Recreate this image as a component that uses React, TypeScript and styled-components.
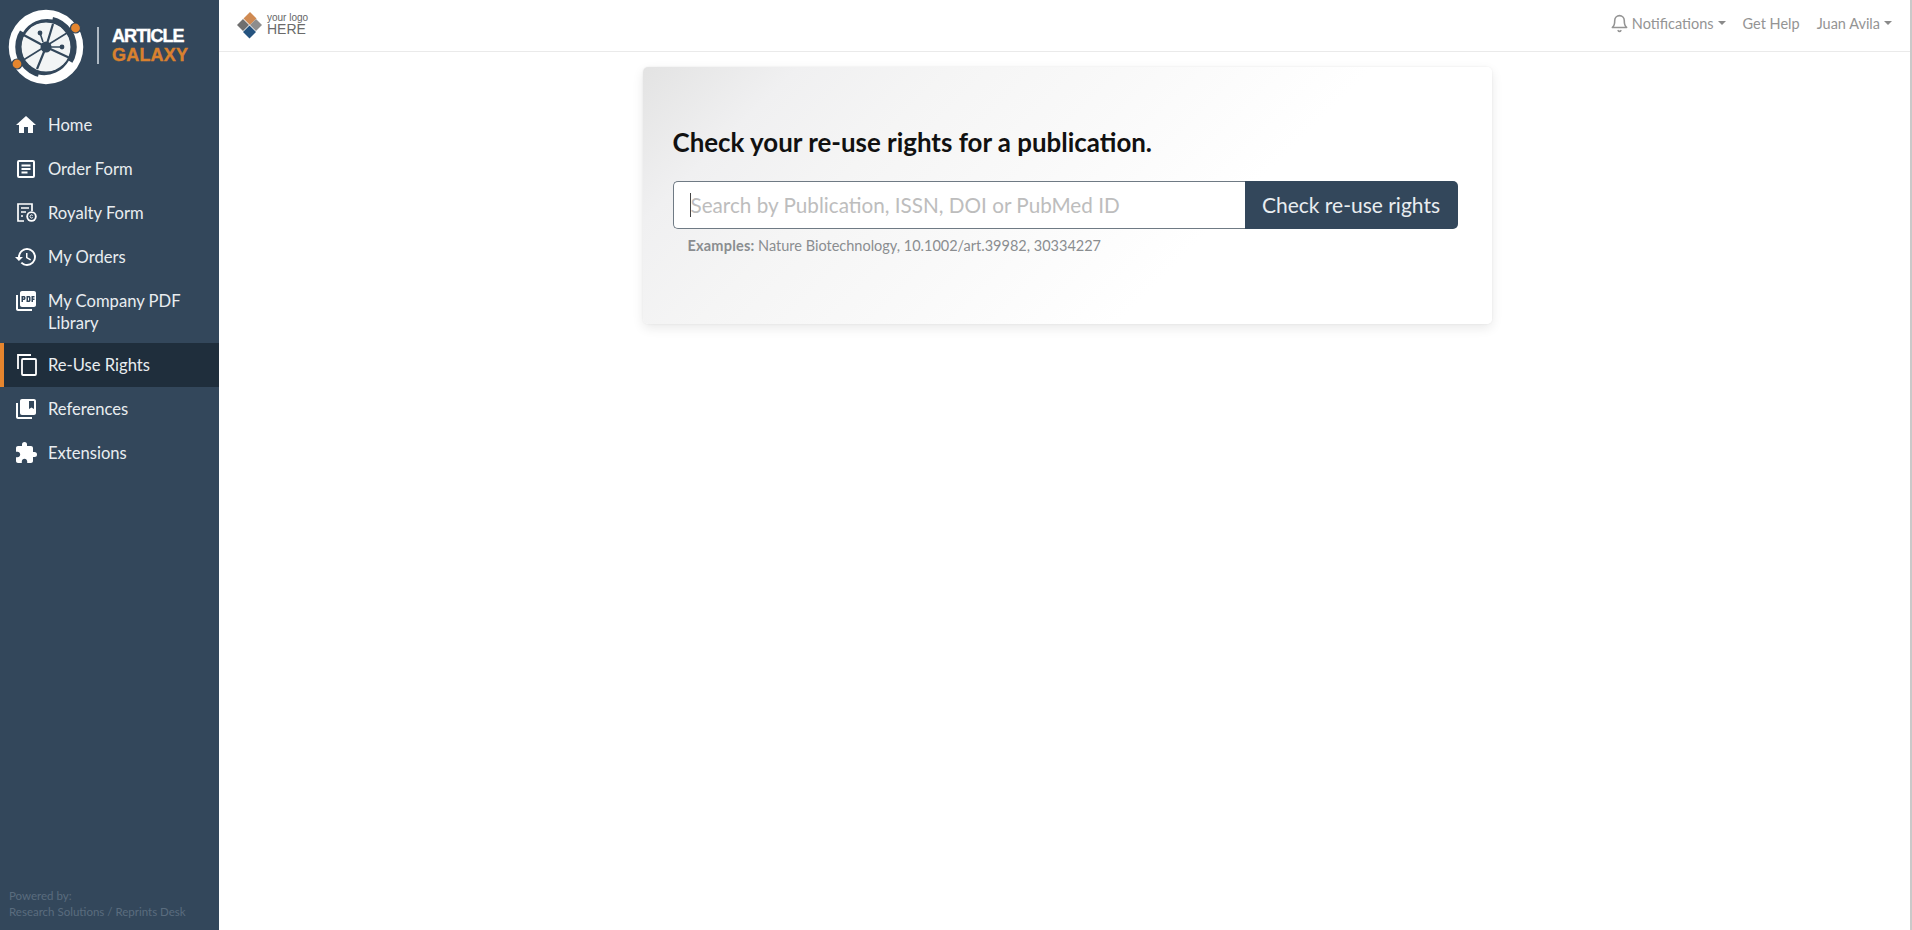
import React from 'react';
import styled, { createGlobalStyle } from 'styled-components';
import {
    MdCollectionsBookmark,
    MdExtension,
    MdHistory,
    MdHome,
    MdPictureAsPdf,
} from 'react-icons/md';
import { FiBell } from 'react-icons/fi';

const GlobalStyle = createGlobalStyle`
    html, body {
        margin: 0;
        height: 100%;
        background: #fff;
    }
    body {
        font-family: 'Lato', 'Noto Sans', sans-serif;
        overflow: hidden;
    }
`

const Page = styled.div`
    display: flex;
    height: 930px;
    width: 1912px;
    border-right: 2px solid #c9c9c9;
    box-sizing: border-box;
`

const Sidebar = styled.aside`
    width: 219px;
    flex: none;
    display: flex;
    flex-direction: column;
    background: #33475b;
`

const LogoRow = styled.div`
    height: 103px;
    display: flex;
    align-items: flex-start;
`

const LogoDivider = styled.div`
    width: 2px;
    height: 37px;
    background: #aeb9c3;
    margin: 27px 13px 0 5px;
`

const LogoWords = styled.div`
    margin-top: 27px;
    font-family: 'Liberation Sans', sans-serif;
    font-weight: 700;
    font-size: 18px;
    line-height: 18.5px;
`

const LogoWord = styled.div<{ $orange?: boolean }>`
    color: ${props => props.$orange ? '#d9812f' : '#fff'};
    letter-spacing: ${props => props.$orange ? '0.2px' : '-0.9px'};
    -webkit-text-stroke: 0.4px ${props => props.$orange ? '#d9812f' : '#fff'};
`

const Nav = styled.nav`
    display: flex;
    flex-direction: column;
    flex: 1;
`

const NavItem = styled.a<{ $active?: boolean; $wrapped?: boolean }>`
    display: flex;
    align-items: flex-start;
    padding: 11px 12px ${props => props.$wrapped ? '9px' : '11px'} ${props => props.$active ? '10px' : '14px'};
    color: #e9edf0;
    font-size: 16.6px;
    line-height: 22px;
    background: ${props => props.$active ? '#1f2e3c' : 'transparent'};
    border-left: ${props => props.$active ? '4px solid #e5852e' : '0 solid transparent'};
`

const NavIcon = styled.span`
    width: 34px;
    flex: none;
    height: 22px;
    display: flex;
    align-items: center;
    color: #fff;
    font-size: 24px;
`

const DrawnIcon = styled.svg`
    margin-left: 3px;
`

const Powered = styled.div`
    padding: 0 9px 10px;
    color: #5a6c7e;
    font-size: 11.5px;
    line-height: 16px;
`

const Main = styled.main`
    flex: 1;
    display: flex;
    flex-direction: column;
    min-width: 0;
`

const Header = styled.header`
    height: 52px;
    box-sizing: border-box;
    border-bottom: 1px solid #eaeaea;
    display: flex;
    align-items: center;
    justify-content: space-between;
    padding: 0 18px 2px 18px;
`

const ClientLogo = styled.div`
    display: flex;
    align-items: center;
    gap: 5px;
`

const ClientWords = styled.div`
    font-family: 'Liberation Sans', sans-serif;
    color: #666;
    font-size: 10px;
    line-height: 10px;
`

const ClientHere = styled.div`
    font-size: 14px;
    line-height: 13px;
    color: #6a6a6a;
`

const TopLinks = styled.div`
    display: flex;
    align-items: center;
    gap: 17px;
    margin-bottom: 2px;
    color: #949494;
    font-size: 14.5px;
`

const TopLink = styled.span`
    display: flex;
    align-items: center;
`

const BellIcon = styled(FiBell)`
    font-size: 19px;
    margin-right: 3px;
`

const Caret = styled.span`
    width: 0;
    height: 0;
    margin-left: 4px;
    margin-bottom: 2px;
    border-top: 4px solid #8a8a8a;
    border-left: 4px solid transparent;
    border-right: 4px solid transparent;
`

const Content = styled.div`
    flex: 1;
    display: flex;
    justify-content: center;
    padding: 15px 0 0 5px;
`

const Card = styled.section`
    width: 849px;
    height: 257px;
    box-sizing: border-box;
    padding: 57px 34px 0 30px;
    border-radius: 5px;
    background: linear-gradient(135deg, #e3e3e3 0%, #f0f0f1 14%, #f5f5f5 28%, #f9f9f9 44%, #fff 66%);
    box-shadow: 0 4px 12px rgba(0, 0, 0, 0.09), 0 0 2px rgba(0, 0, 0, 0.08);
`

const Title = styled.h1`
    margin: 0 0 21px;
    color: #111;
    font-size: 25.9px;
    line-height: 36px;
    font-weight: 700;
`

const SearchRow = styled.div`
    display: flex;
    height: 48px;
`

const SearchBox = styled.div`
    flex: 1;
    display: flex;
    align-items: center;
    box-sizing: border-box;
    padding-left: 16px;
    background: #fff;
    border: 1.5px solid #6f7a84;
    border-right: 0;
    border-radius: 5px 0 0 5px;
    color: #bdbdbd;
    font-size: 20.7px;
`

const TextCursor = styled.span`
    width: 1px;
    height: 24px;
    background: #444;
`

const CheckButton = styled.button`
    width: 213px;
    flex: none;
    border: 0;
    border-radius: 0 5px 5px 0;
    padding: 0 0 2px;
    background: #33475b;
    color: #e9edf0;
    font-family: inherit;
    font-size: 21px;
`

const Examples = styled.p`
    margin: 7px 0 0 15px;
    color: #8a8d90;
    font-size: 14.5px;
    line-height: 20px;
`

const ExamplesLabel = styled.b`
    letter-spacing: 0.2px;
`

function OrderIcon() {
    return (
        <DrawnIcon width="18" height="18" viewBox="0 0 18 18" fill="none" stroke="currentColor" strokeWidth="2">
            <rect x="1" y="1" width="16" height="16" rx="1" />
            <path d="M4.500 5.500h9M4.500 9h9M4.500 12.500h6" strokeWidth="1.800" />
        </DrawnIcon>
    )
}

function RoyaltyIcon() {
    return (
        <DrawnIcon width="21" height="20" viewBox="0 0 21 20" fill="none" stroke="currentColor" strokeWidth="1.700">
            <path d="M7 18H1V1h14v7" />
            <path d="M4 5h8M4 9h5M4 13h2" />
            <circle cx="14.500" cy="13.500" r="5.200" fill="#fff" stroke="none" />
            <circle cx="14.500" cy="13.500" r="3.400" fill="#33475b" stroke="none" />
            <path d="M15.700 12.500a1.500 1.500 0 1 0 0 2" strokeWidth="1" />
        </DrawnIcon>
    )
}

function ReuseIcon() {
    return (
        <DrawnIcon width="20" height="22" viewBox="0 0 20 22" fill="none" stroke="currentColor" strokeWidth="1.800">
            <path d="M1 15V1h13" />
            <rect x="5" y="5" width="14" height="16" rx="1" />
        </DrawnIcon>
    )
}

const navItems = [
    { label: 'Home', icon: <MdHome /> },
    { label: 'Order Form', icon: <OrderIcon /> },
    { label: 'Royalty Form', icon: <RoyaltyIcon /> },
    { label: 'My Orders', icon: <MdHistory /> },
    { label: 'My Company PDF Library', icon: <MdPictureAsPdf />, wrapped: true },
    { label: 'Re-Use Rights', icon: <ReuseIcon />, active: true },
    { label: 'References', icon: <MdCollectionsBookmark /> },
    { label: 'Extensions', icon: <MdExtension /> },
];

function GalaxyLogo() {
    return (
        <svg width="92" height="92" viewBox="0 0 92 92">
            <circle cx="46" cy="47" r="34" fill="none" stroke="#fff" strokeWidth="6.500" />
            <circle cx="46" cy="47" r="24.500" fill="#f2f4f5" />
            <circle cx="46" cy="47" r="27" fill="none" stroke="#33475b" strokeWidth="4" />
            <path d="M21 31 A31 31 0 0 1 53 17" fill="none" stroke="#fff" strokeWidth="5" />
            <path d="M71 62 A31 31 0 0 1 38 77" fill="none" stroke="#fff" strokeWidth="5" />
            <path d="M20 33 46 47M53 24 46 47M46 47 37 69M46 47 72 59" stroke="#33475b" strokeWidth="2.200" fill="none" />
            <path d="M17 64 75 28M40 33l3 9M62 47H46" stroke="#33475b" strokeWidth="1.600" fill="none" />
            <circle cx="46" cy="47" r="5.500" fill="#33475b" />
            <circle cx="40" cy="33" r="2.400" fill="#33475b" />
            <circle cx="62" cy="47" r="2.400" fill="#33475b" />
            <circle cx="75.500" cy="28" r="5" fill="#e5852e" stroke="#33475b" strokeWidth="1.200" />
            <circle cx="17" cy="64" r="5" fill="#e5852e" stroke="#33475b" strokeWidth="1.200" />
        </svg>
    )
}

function DiamondLogo() {
    return (
        <svg width="25" height="28" viewBox="0 0 25 28">
            <path d="M13 1 19.500 7.500 13 14 6.500 7.500Z" fill="#cf8a52" />
            <path d="M6 8 12 14 6 20 0 14Z" fill="#6f6f6f" />
            <path d="M19 8 25 14 19 20 13 14Z" fill="#8d8d8d" />
            <path d="M12.500 14.500 19 21 12.500 27.500 6 21Z" fill="#25537f" />
        </svg>
    )
}

export default function App() {
    return (
        <>
            <GlobalStyle />
            <Page>
                <Sidebar>
                    <LogoRow>
                        <GalaxyLogo />
                        <LogoDivider />
                        <LogoWords>
                            <LogoWord>ARTICLE</LogoWord>
                            <LogoWord $orange>GALAXY</LogoWord>
                        </LogoWords>
                    </LogoRow>
                    <Nav>
                        {navItems.map((item) => (
                            <NavItem key={item.label} $active={item.active} $wrapped={item.wrapped}>
                                <NavIcon>{item.icon}</NavIcon>
                                <span>{item.label}</span>
                            </NavItem>
                        ))}
                    </Nav>
                    <Powered>
                        Powered by:<br />
                        Research Solutions / Reprints Desk
                    </Powered>
                </Sidebar>
                <Main>
                    <Header>
                        <ClientLogo>
                            <DiamondLogo />
                            <ClientWords>
                                your logo
                                <ClientHere>HERE</ClientHere>
                            </ClientWords>
                        </ClientLogo>
                        <TopLinks>
                            <TopLink><BellIcon />Notifications<Caret /></TopLink>
                            <TopLink>Get Help</TopLink>
                            <TopLink>Juan Avila<Caret /></TopLink>
                        </TopLinks>
                    </Header>
                    <Content>
                        <Card>
                            <Title>Check your re-use rights for a publication.</Title>
                            <SearchRow>
                                <SearchBox>
                                    <TextCursor />
                                    Search by Publication, ISSN, DOI or PubMed ID
                                </SearchBox>
                                <CheckButton>Check re-use rights</CheckButton>
                            </SearchRow>
                            <Examples>
                                <ExamplesLabel>Examples:</ExamplesLabel> Nature Biotechnology, 10.1002/art.39982, 30334227
                            </Examples>
                        </Card>
                    </Content>
                </Main>
            </Page>
        </>
    )
}
